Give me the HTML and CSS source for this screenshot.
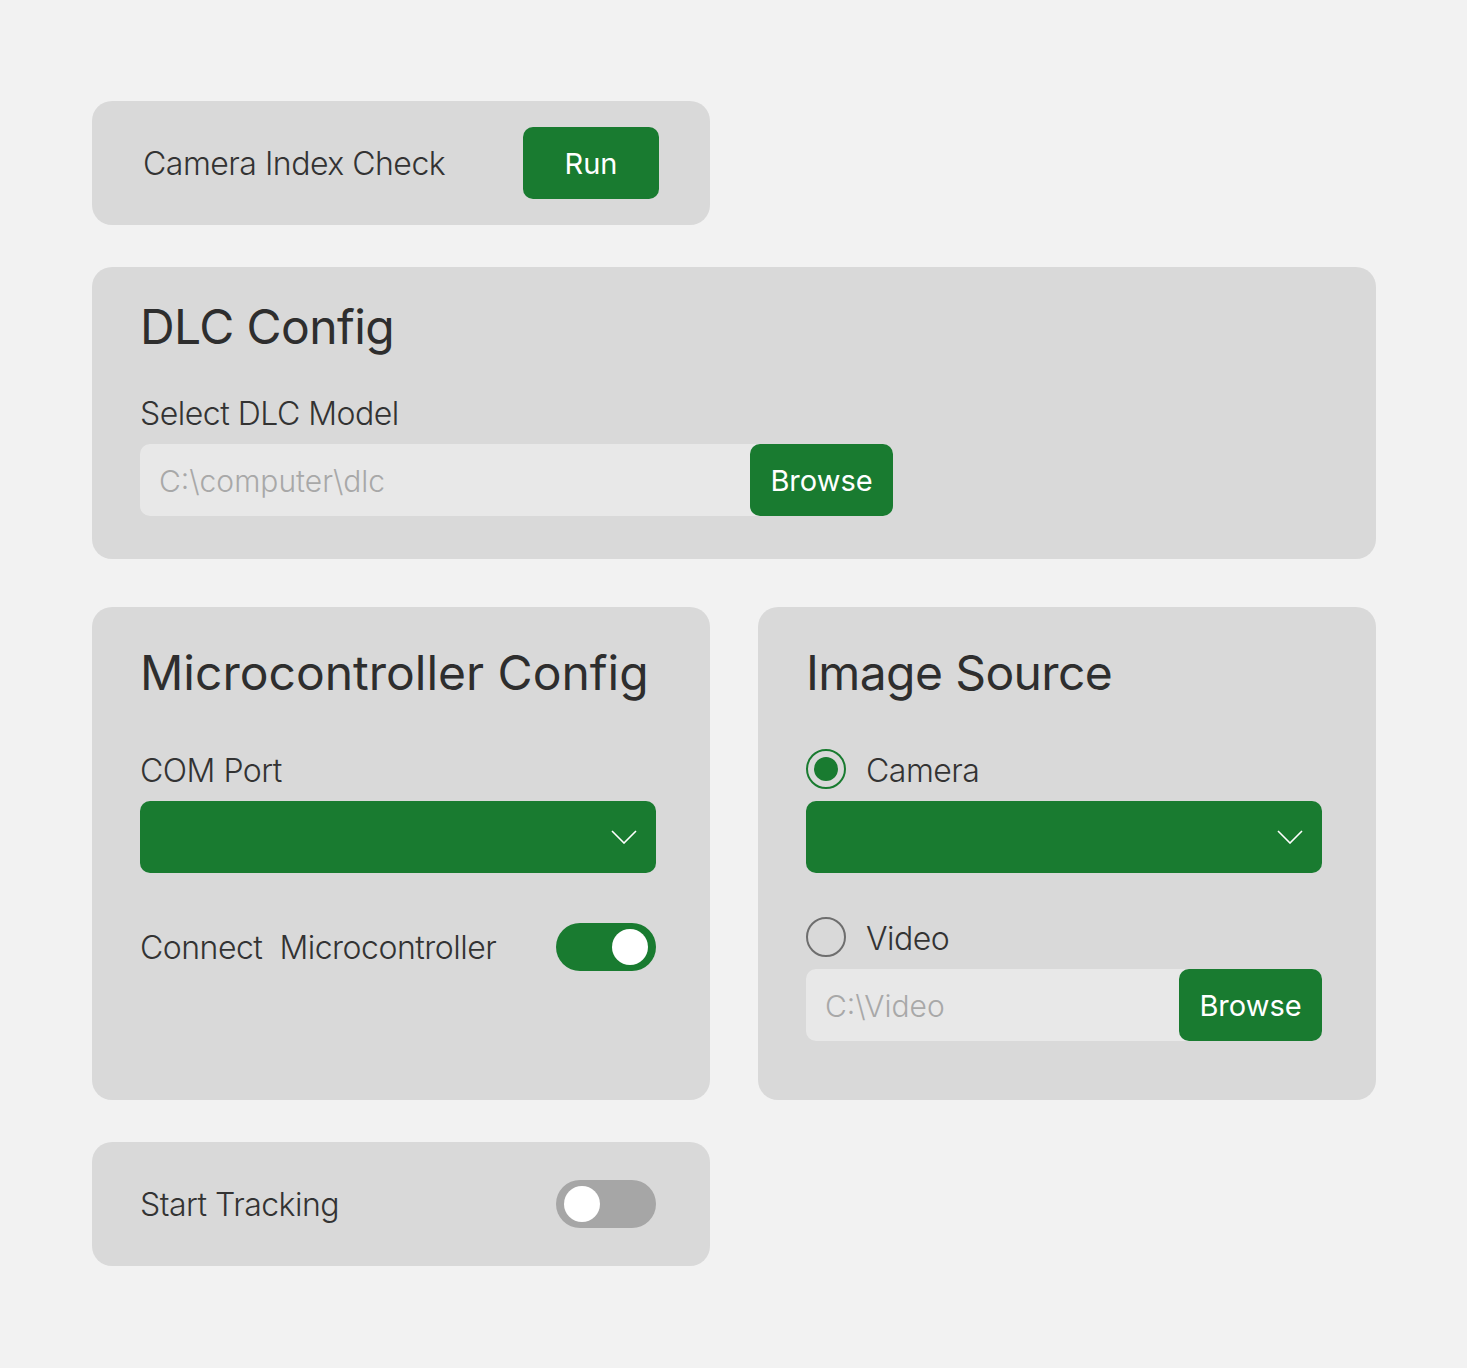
FILE: index.html
```html
<!DOCTYPE html>
<html lang="en">
<head>
<meta charset="utf-8">
<title>Tracking Setup</title>
<link rel="stylesheet" href="styles.css">
</head>
<body>
<main class="page">
  <section class="card card-check">
    <span class="label">Camera Index Check</span>
    <button class="btn btn-run">Run</button>
  </section>

  <section class="card card-dlc">
    <h2 class="title">DLC Config</h2>
    <div class="label field-label">Select DLC Model</div>
    <div class="path path-dlc">
      <span class="placeholder">C:\computer\dlc</span>
      <button class="btn btn-browse">Browse</button>
    </div>
  </section>

  <div class="row">
    <section class="card card-tall">
      <h2 class="title title-wide">Microcontroller Config</h2>
      <div class="label field-label">COM Port</div>
      <div class="select">
        <svg class="chev" width="26" height="14" viewBox="0 0 26 14"><path d="M1 1 L13 13 L25 1" fill="none" stroke="#fff" stroke-width="1.6"/></svg>
      </div>
      <div class="toggle-row connect-row">
        <span class="label">Connect&nbsp; Microcontroller</span>
        <span class="toggle on"><span class="knob"></span></span>
      </div>
    </section>

    <section class="card card-tall">
      <h2 class="title">Image Source</h2>
      <div class="radio-row first-radio">
        <span class="radio checked"></span>
        <span class="label">Camera</span>
      </div>
      <div class="select">
        <svg class="chev" width="26" height="14" viewBox="0 0 26 14"><path d="M1 1 L13 13 L25 1" fill="none" stroke="#fff" stroke-width="1.6"/></svg>
      </div>
      <div class="radio-row second-radio">
        <span class="radio"></span>
        <span class="label">Video</span>
      </div>
      <div class="path path-video">
        <span class="placeholder">C:\Video</span>
        <button class="btn btn-browse">Browse</button>
      </div>
    </section>
  </div>

  <section class="card card-track">
    <span class="label">Start Tracking</span>
    <span class="toggle"><span class="knob"></span></span>
  </section>
</main>
</body>
</html>
```

FILE: styles.css
```css
* { box-sizing: border-box; }

body {
  margin: 0;
  background: #f2f2f2;
  font-family: "Inter", "Noto Sans", sans-serif;
  color: #333333;
}

.page {
  padding: 101px 0 0 92px;
  width: 1376px;
  display: flex;
  flex-direction: column;
}

.card {
  background: #d9d9d9;
  border-radius: 20px;
}

.label {
  font-size: 32px;
  font-weight: 300;
  line-height: 40px;
  letter-spacing: -0.5px;
  color: #333333;
  padding-top: 2px;
}

.title {
  margin: 0;
  font-size: 48px;
  font-weight: 400;
  line-height: 58px;
  letter-spacing: -0.6px;
  color: #2e2e2e;
}

.title-wide {
  letter-spacing: 0;
}

.btn {
  border: none;
  background: #197b30;
  color: #ffffff;
  font-family: "Inter", "Noto Sans", sans-serif;
  font-size: 29px;
  font-weight: 400;
  border-radius: 10px;
  padding: 0;
  cursor: pointer;
}

/* Camera index check */
.card-check {
  width: 618px;
  height: 124px;
  padding: 0 51px 0 51px;
  display: flex;
  align-items: center;
  justify-content: space-between;
}

.btn-run {
  width: 136px;
  height: 72px;
}

/* DLC */
.card-dlc {
  margin-top: 42px;
  height: 292px;
  padding: 31px 48px 0 48px;
}

.field-label {
  margin-top: 36px;
  height: 40px;
}

.path {
  margin-top: 12px;
  height: 72px;
  background: #e8e8e8;
  border-radius: 10px;
  display: flex;
  align-items: center;
  justify-content: space-between;
}

.path-dlc { width: 753px; }

.placeholder {
  padding-left: 19px;
  padding-top: 2px;
  font-size: 30px;
  font-weight: 300;
  color: #a8a8a8;
  letter-spacing: 0;
}

.btn-browse {
  width: 143px;
  height: 72px;
}

/* Two column row */
.row {
  margin-top: 48px;
  display: grid;
  grid-template-columns: 618px 618px;
  column-gap: 48px;
}

.card-tall {
  height: 493px;
  padding: 37px 54px 0 48px;
}

.card-tall .field-label {
  margin-top: 47px;
}

.select {
  margin-top: 12px;
  height: 72px;
  background: #197b30;
  border-radius: 10px;
  display: flex;
  align-items: center;
  justify-content: flex-end;
  padding-right: 19px;
}

.toggle-row {
  display: flex;
  align-items: center;
  justify-content: space-between;
}

.connect-row {
  margin-top: 50px;
}

.toggle {
  width: 100px;
  height: 48px;
  border-radius: 24px;
  background: #a6a6a6;
  display: flex;
  align-items: center;
  padding: 0 8px;
}

.toggle.on {
  background: #197b30;
  justify-content: flex-end;
}

.knob {
  width: 36px;
  height: 36px;
  border-radius: 50%;
  background: #ffffff;
}

.radio-row {
  display: flex;
  align-items: center;
  gap: 20px;
  height: 40px;
}

.radio-row .label {
  padding-top: 3px;
}

.first-radio { margin-top: 47px; }
.second-radio { margin-top: 44px; }

.radio {
  width: 40px;
  height: 40px;
  border-radius: 50%;
  border: 2px solid #6e6e6e;
  display: flex;
  align-items: center;
  justify-content: center;
}

.radio.checked {
  border-color: #197b30;
}

.radio.checked::after {
  content: "";
  width: 24px;
  height: 24px;
  border-radius: 50%;
  background: #197b30;
}

.path-video { width: 516px; }

/* Start tracking */
.card-track {
  margin-top: 42px;
  width: 618px;
  height: 124px;
  padding: 0 54px 0 48px;
  display: flex;
  align-items: center;
  justify-content: space-between;
}
```
